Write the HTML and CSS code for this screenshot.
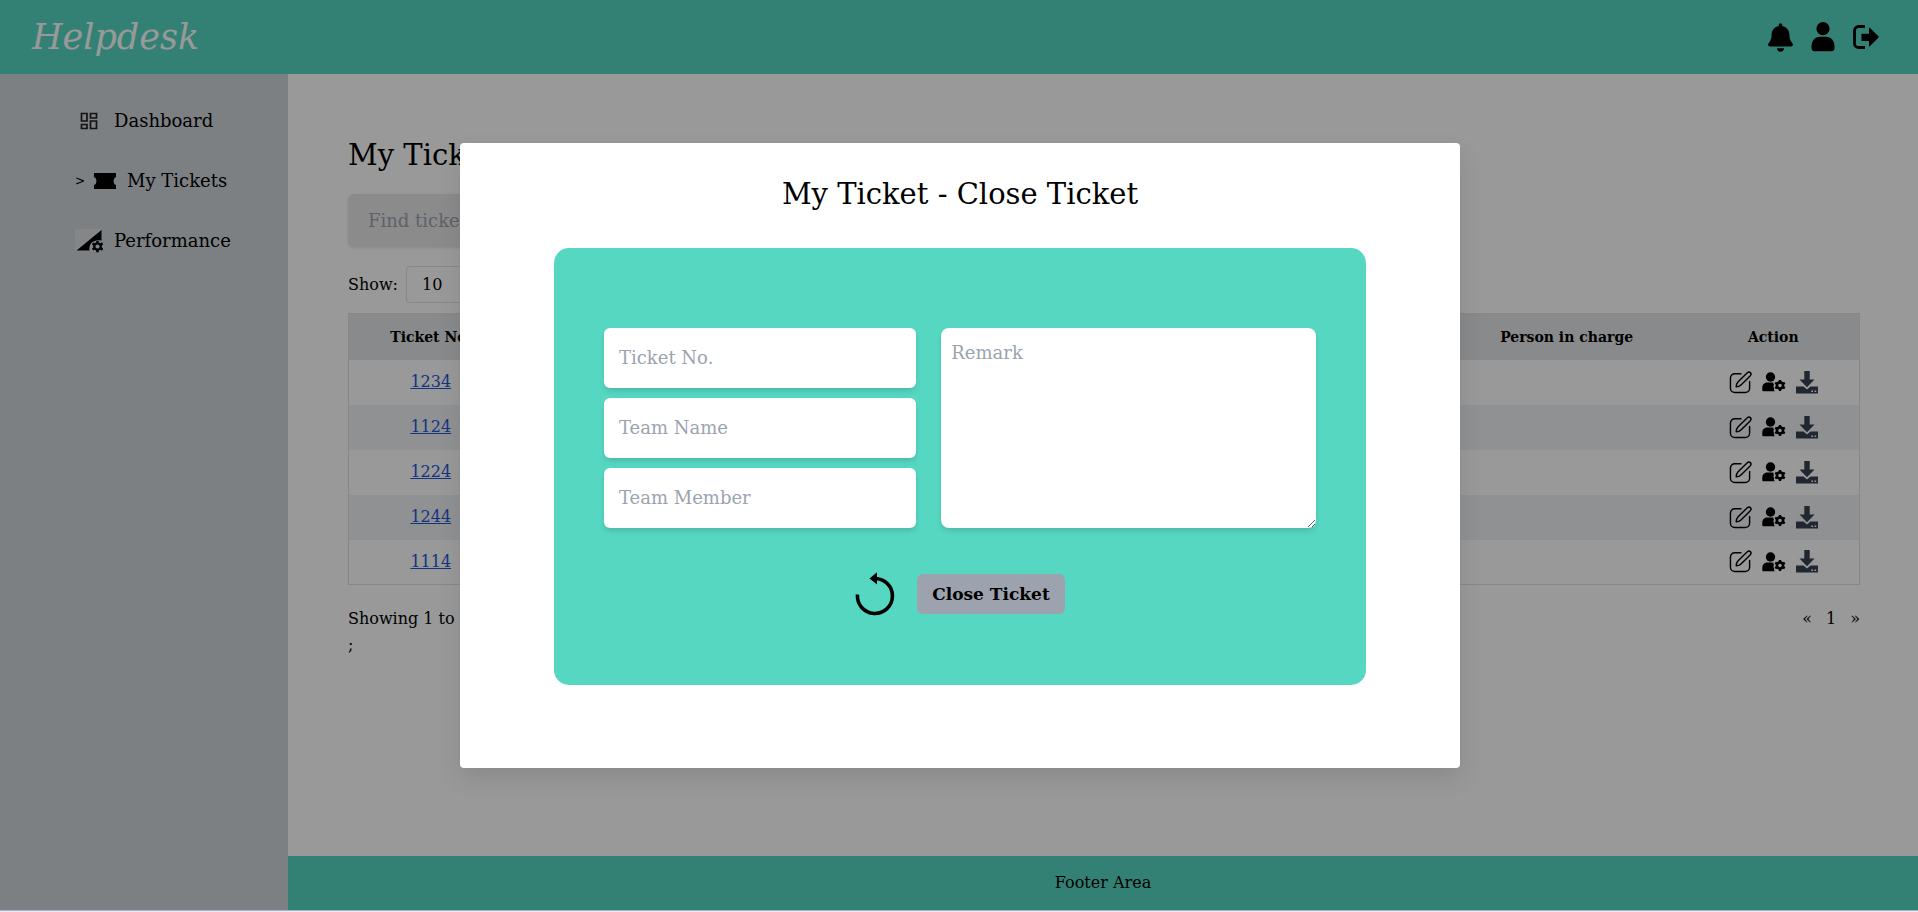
FILE: index.html
```html
<!DOCTYPE html>
<html lang="en">
<head>
<meta charset="utf-8">
<meta name="viewport" content="width=device-width, initial-scale=1">
<title>Helpdesk</title>
<link rel="stylesheet" href="styles.css">
</head>
<body>
<svg class="sprite" aria-hidden="true">
  <symbol id="edit" viewBox="0 0 24 24">
    <g fill="none" stroke="currentColor" stroke-width="1.5" stroke-linecap="round" stroke-linejoin="round">
      <path d="M12.5 2.8H6A4.5 4.5 0 0 0 1.5 7.300V18A4.500 4.500 0 0 0 6 22.500H17A4.500 4.500 0 0 0 21.500 18V11"/>
      <path d="M7.500 16.500C7.500 14.500 8 13 9.300 11.500L18.800 2C20 .9 21.600 1 22.300 1.700C23 2.400 23.100 4 22 5.200L12.500 14.700C11 16.200 9.500 16.500 7.500 16.500Z"/>
    </g>
  </symbol>
  <symbol id="user-cog" viewBox="0 0 24 20">
    <circle cx="8.500" cy="5" r="4.700"/>
    <path d="M5 10.600H11.500C11 11.400 11.300 12 12 12.600C11.300 14 11.300 15.500 12.200 16.600C11.600 17.500 12 18.500 13 19.300H1.500C.8 19.300.3 18.800.3 18V16C.3 13 2.300 10.600 5 10.600Z"/>
    <circle cx="18" cy="13.500" r="3.100" fill="none" stroke="currentColor" stroke-width="2.600"/>
    <path fill="none" stroke="currentColor" stroke-width="2.400" d="M18 8V10.200M18 16.800V19M13.200 10.700L15.200 11.900M20.800 15.100L22.800 16.300M13.200 16.300L15.200 15.100M20.800 11.900L22.800 10.700"/>
  </symbol>
  <symbol id="download" viewBox="0 0 22 23">
    <path d="M8.300 0H13.700V8.500H18.500L11 16.300L3.500 8.500H8.300Z"/>
    <path fill-rule="evenodd" d="M0 15.500H7.500L11 18.500L14.500 15.500H22V22.500H0ZM15.300 19.500V21H17V19.500ZM18.500 19.500V21H20.200V19.500Z"/>
  </symbol>
</svg>

<div class="page">
  <header class="topbar">
    <a class="brand" href="#">Helpdesk</a>
    <nav class="topbar-actions" aria-label="Account">
      <button class="icon-button" type="button" aria-label="Notifications">
        <svg width="25" height="29" viewBox="0 0 448 512"><path d="M224 0c-17.700 0-32 14.300-32 32V51.200C119 66 64 130.600 64 208v18.800c0 47-17.300 92.400-48.500 127.600l-7.400 8.300c-8.400 9.400-10.400 22.900-5.300 34.400S19.400 416 32 416H416c12.600 0 24-7.400 29.200-18.900s3.100-25-5.300-34.400l-7.400-8.300C401.300 319.200 384 273.900 384 226.800V208c0-77.400-55-142-128-156.800V32c0-17.700-14.300-32-32-32zm45.300 493.300c12-12 18.700-28.300 18.700-45.300H224 160c0 17 6.700 33.300 18.700 45.300s28.300 18.700 45.300 18.700s33.300-6.700 45.300-18.700z"/></svg>
      </button>
      <button class="icon-button" type="button" aria-label="Profile">
        <svg width="24" height="30" viewBox="0 0 24 30"><circle cx="12" cy="6.700" r="6.600"/><path d="M9 14.800H15C20 14.800 23.500 19 23.500 24.500V26C23.500 28 22.300 29.300 20.500 29.300H3.500C1.700 29.300.5 28 .5 26V24.500C.5 19 4 14.800 9 14.800Z"/></svg>
      </button>
      <button class="icon-button" type="button" aria-label="Log out">
        <svg width="26" height="24" viewBox="0 0 26 24"><path d="M12 1.500H5.500A4 4 0 0 0 1.500 5.500V18.500A4 4 0 0 0 5.500 22.500H12" fill="none" stroke="currentColor" stroke-width="2.800"/><path d="M8.500 8.800H16V3.200Q16 2 17 3L25.400 11.200Q26 12 25.400 12.800L17 21Q16 22 16 20.800V16H8.500Z"/></svg>
      </button>
    </nav>
  </header>

  <div class="body">
    <nav class="sidebar" aria-label="Main">
      <a class="side-link" href="#">
        <span class="side-icon"><svg width="18" height="18" viewBox="0 0 18 18"><path d="M1.500 1.500H7V9H1.500ZM10.500 1.500H16.500V6H10.500ZM10.500 9H16.500V16.500H10.500ZM1.500 12.500H7V16.500H1.500Z" fill="none" stroke="#222" stroke-width="1.700"/></svg></span>
        <span>Dashboard</span>
      </a>
      <a class="side-link" href="#" aria-current="page">
        <span class="side-marker">&gt;</span>
        <svg width="22" height="16" viewBox="0 0 22 16"><path d="M0 0H22V4Q19.500 5 19.500 8T22 12V16H0V12Q2.500 11 2.500 8T0 4Z"/></svg>
        <span>My Tickets</span>
      </a>
      <a class="side-link" href="#">
        <span class="side-icon"><svg width="28" height="24" viewBox="0 0 28 24"><path d="M0 0H26V22H0Z" fill="#dcdfe2"/><path d="M1.500 21.500L26.500 1V11.500Q18 10.500 15 16Q14 18.500 14.500 21.500Z"/><circle cx="22.500" cy="17.500" r="3.200" fill="none" stroke="currentColor" stroke-width="2.200"/><path fill="none" stroke="currentColor" stroke-width="2.600" d="M22.500 12V14.500M22.500 20.500V23.300M17.500 14.700L20 16M25 19L27.700 20.500M17.500 20.500L20 19M25 16L27.700 14.500"/></svg></span>
        <span>Performance</span>
      </a>
    </nav>

    <div class="main-column">
      <main class="content">
        <h1 class="heading">My Tickets</h1>
        <input class="search" type="search" placeholder="Find ticket" aria-label="Find ticket">
        <div class="show-row">
          <label for="page-size">Show:</label>
          <select class="page-size" id="page-size"><option>10</option><option>25</option><option>50</option></select>
        </div>
        <table class="tickets">
          <colgroup><col class="col-no"><col><col><col><col class="col-person"><col class="col-action"></colgroup>
          <thead>
            <tr><th>Ticket No.</th><th>Subject</th><th>Status</th><th>Date</th><th>Person in charge</th><th>Action</th></tr>
          </thead>
          <tbody>
            <tr><td><a href="#">1234</a></td><td></td><td></td><td></td><td></td><td><div class="row-actions"><button class="icon-button" type="button" aria-label="Edit 1234"><svg width="23" height="23"><use href="#edit"/></svg></button><button class="icon-button" type="button" aria-label="Assign 1234"><svg width="24" height="20"><use href="#user-cog"/></svg></button><button class="icon-button slate" type="button" aria-label="Download 1234"><svg width="22" height="23"><use href="#download"/></svg></button></div></td></tr>
            <tr><td><a href="#">1124</a></td><td></td><td></td><td></td><td></td><td><div class="row-actions"><button class="icon-button" type="button" aria-label="Edit 1124"><svg width="23" height="23"><use href="#edit"/></svg></button><button class="icon-button" type="button" aria-label="Assign 1124"><svg width="24" height="20"><use href="#user-cog"/></svg></button><button class="icon-button slate" type="button" aria-label="Download 1124"><svg width="22" height="23"><use href="#download"/></svg></button></div></td></tr>
            <tr><td><a href="#">1224</a></td><td></td><td></td><td></td><td></td><td><div class="row-actions"><button class="icon-button" type="button" aria-label="Edit 1224"><svg width="23" height="23"><use href="#edit"/></svg></button><button class="icon-button" type="button" aria-label="Assign 1224"><svg width="24" height="20"><use href="#user-cog"/></svg></button><button class="icon-button slate" type="button" aria-label="Download 1224"><svg width="22" height="23"><use href="#download"/></svg></button></div></td></tr>
            <tr><td><a href="#">1244</a></td><td></td><td></td><td></td><td></td><td><div class="row-actions"><button class="icon-button" type="button" aria-label="Edit 1244"><svg width="23" height="23"><use href="#edit"/></svg></button><button class="icon-button" type="button" aria-label="Assign 1244"><svg width="24" height="20"><use href="#user-cog"/></svg></button><button class="icon-button slate" type="button" aria-label="Download 1244"><svg width="22" height="23"><use href="#download"/></svg></button></div></td></tr>
            <tr><td><a href="#">1114</a></td><td></td><td></td><td></td><td></td><td><div class="row-actions"><button class="icon-button" type="button" aria-label="Edit 1114"><svg width="23" height="23"><use href="#edit"/></svg></button><button class="icon-button" type="button" aria-label="Assign 1114"><svg width="24" height="20"><use href="#user-cog"/></svg></button><button class="icon-button slate" type="button" aria-label="Download 1114"><svg width="22" height="23"><use href="#download"/></svg></button></div></td></tr>
          </tbody>
        </table>
        <div class="table-foot">
          <span>Showing 1 to 5 of 5 entries</span>
          <nav class="pager" aria-label="Pages"><a href="#">«</a><a href="#">1</a><a href="#">»</a></nav>
        </div>
        <span>;</span>
      </main>
      <footer class="footer">Footer Area</footer>
    </div>
  </div>

  <div class="overlay">
    <section class="modal" role="dialog" aria-modal="true" aria-labelledby="modal-title">
      <h2 class="heading modal-title" id="modal-title">My Ticket - Close Ticket</h2>
      <form class="card">
        <div class="fields">
          <div class="field-stack">
            <input class="field" type="text" placeholder="Ticket No." aria-label="Ticket No.">
            <input class="field" type="text" placeholder="Team Name" aria-label="Team Name">
            <input class="field" type="text" placeholder="Team Member" aria-label="Team Member">
          </div>
          <textarea class="field remark" placeholder="Remark" aria-label="Remark"></textarea>
        </div>
        <div class="form-actions">
          <button class="icon-button" type="reset" aria-label="Reset">
            <svg width="40" height="44" viewBox="0 0 40 44"><path d="M2.500 22.500A17.500 17.500 0 1 0 20 6.500" fill="none" stroke="currentColor" stroke-width="3.600"/><path d="M14.500 6.500L22 .3V12.500Z"/></svg>
          </button>
          <button class="submit" type="submit">Close Ticket</button>
        </div>
      </form>
    </section>
  </div>
</div>
</body>
</html>
```
FILE: styles.css
```css
* {
  box-sizing: border-box;
}

html {
  background: #e6ebf2;
}

body {
  margin: 0;
  font-family: "DejaVu Serif", serif;
  font-size: 16px;
  line-height: 24px;
  color: #000;
}

a {
  color: inherit;
  text-decoration: none;
}

input,
select,
textarea,
button {
  font-family: inherit;
  color: inherit;
}

svg {
  display: block;
  fill: currentColor;
}

.sprite {
  position: absolute;
  width: 0;
  height: 0;
}

.page {
  display: flex;
  flex-direction: column;
  min-height: calc(100vh - 1px);
  border-bottom: 1px solid #a9b5c0;
}

.topbar {
  display: flex;
  align-items: center;
  justify-content: space-between;
  height: 74px;
  padding: 0 39px 0 32px;
  background: #56d7c2;
}

.brand {
  font-size: 35px;
  line-height: 40px;
  font-style: italic;
  color: #fff;
}

.topbar-actions {
  display: flex;
  align-items: center;
  gap: 18px;
}

.icon-button {
  padding: 0;
  border: 0;
  background: none;
  cursor: pointer;
}

.slate {
  color: #374151;
}

.body {
  display: flex;
  flex: 1;
}

.sidebar {
  display: flex;
  flex-direction: column;
  gap: 30px;
  width: 288px;
  padding: 32px 20px 32px 75px;
  font-size: 18px;
  background: #d0d5d9;
}

.side-link {
  display: flex;
  align-items: center;
  gap: 11px;
  height: 30px;
}

.side-icon {
  display: flex;
  justify-content: center;
  width: 28px;
}

.side-marker {
  width: 8px;
  font-size: 12px;
}

.main-column {
  display: flex;
  flex: 1;
  flex-direction: column;
  background: #fff;
}

.content {
  flex: 1;
  padding: 63px 58px 60px 60px;
}

.heading {
  margin: 0;
  font-size: 29px;
  line-height: 36px;
  font-weight: 400;
}

.search {
  display: block;
  width: 50%;
  height: 53px;
  margin: 21px 0 19px;
  padding: 0 20px;
  border: 0;
  border-radius: 6px;
  font-size: 18px;
  background: #e8e8e8;
  box-shadow: 0 1px 3px #0000001a;
}

.search::placeholder,
.field::placeholder {
  color: #9ca3af;
  opacity: 1;
}

.show-row {
  display: flex;
  align-items: center;
  gap: 8px;
  margin-bottom: 10px;
}

.page-size {
  width: 68px;
  height: 37px;
  padding: 0 11px;
  border: 1px solid #dfe1e5;
  border-radius: 4px;
  font-size: 16px;
  background: #fff;
}

.tickets {
  width: 100%;
  table-layout: fixed;
  border-collapse: collapse;
  border: 1px solid #dfe1e5;
  text-align: center;
}

.col-no {
  width: 164px;
}

.col-person {
  width: 16%;
}

.col-action {
  width: 172px;
}

.tickets th {
  height: 46px;
  padding: 0;
  font-size: 14px;
  background: #e3e6e9;
}

.tickets td {
  height: 45px;
  padding: 0;
}

.tickets tbody tr:nth-child(even) {
  background: #f1f2f5;
}

.tickets a {
  color: #2457d6;
  text-decoration: underline;
}

.row-actions {
  display: flex;
  align-items: center;
  justify-content: center;
  gap: 10px;
}

.table-foot {
  display: flex;
  justify-content: space-between;
  margin-top: 20px;
  line-height: 28px;
}

.pager {
  display: flex;
  gap: 14px;
}

.footer {
  padding: 15px;
  text-align: center;
  background: #56d7c2;
}

.overlay {
  position: absolute;
  inset: 0 0 2px;
  display: flex;
  align-items: center;
  justify-content: center;
  padding-left: 2px;
  background: #00000066;
}

.modal {
  width: 1000px;
  max-width: 90%;
  padding: 33px 94px 83px;
  border-radius: 4px;
  background: #fff;
  box-shadow: 0 10px 25px #0000001a;
}

.modal-title {
  margin-bottom: 36px;
  text-align: center;
}

.card {
  padding: 80px 50px 69px;
  border-radius: 15px;
  background: #56d7c2;
}

.fields {
  display: grid;
  grid-template-columns: 5fr 6fr;
  gap: 25px;
}

.field-stack {
  display: grid;
  gap: 10px;
}

.field {
  width: 100%;
  height: 60px;
  padding: 0 15px;
  border: 0;
  border-radius: 6px;
  font-size: 18px;
  background: #fff;
  box-shadow: 0 4px 6px -1px #0000001a, 0 2px 4px -1px #00000010;
}

.remark {
  height: 200px;
  padding: 14px 10px;
  border-radius: 8px;
}

.form-actions {
  display: flex;
  align-items: center;
  justify-content: center;
  gap: 22px;
  margin-top: 44px;
}

.submit {
  height: 40px;
  padding: 0 15px;
  border: 0;
  border-radius: 6px;
  font-size: 17px;
  font-weight: 700;
  background: #9ca3af;
  cursor: pointer;
}
```
